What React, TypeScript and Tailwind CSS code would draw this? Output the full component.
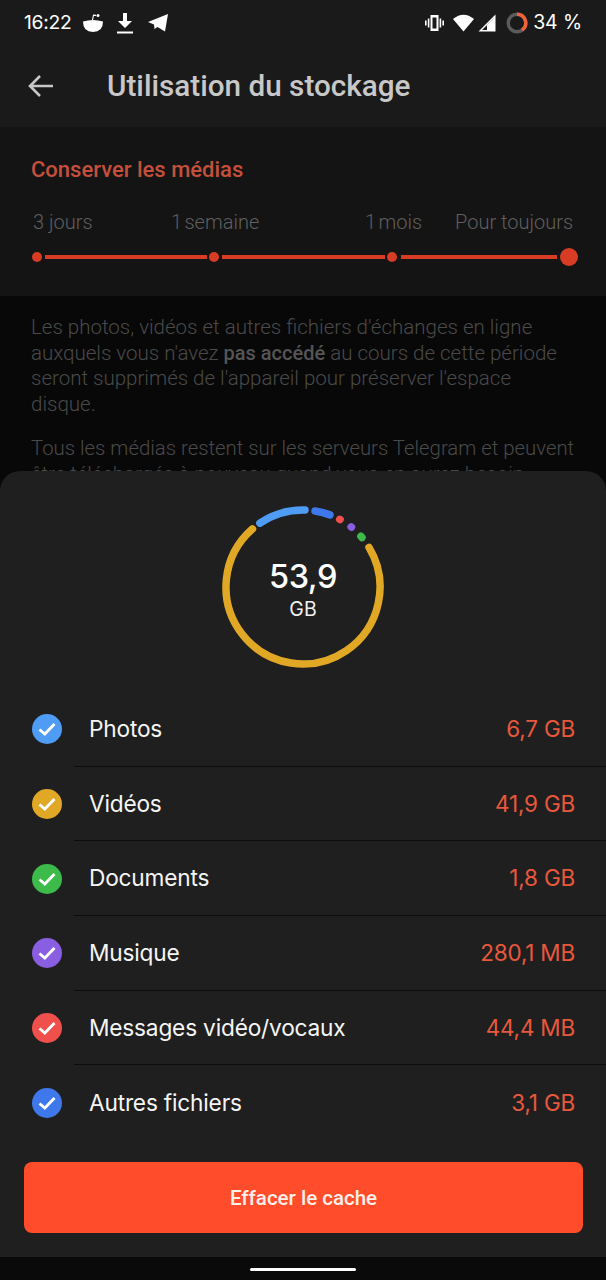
import type { ReactNode } from 'react';

const rows = [
  { label: 'Photos', size: '6,7 GB', bg: 'bg-[#4f9cf5]', line: true },
  { label: 'Vidéos', size: '41,9 GB', bg: 'bg-[#e0a825]', line: true },
  { label: 'Documents', size: '1,8 GB', bg: 'bg-[#3cba4a]', line: true },
  { label: 'Musique', size: '280,1 MB', bg: 'bg-[#8a5ee0]', line: true },
  { label: 'Messages vidéo/vocaux', size: '44,4 MB', bg: 'bg-[#f0504c]', line: true },
  { label: 'Autres fichiers', size: '3,1 GB', bg: 'bg-[#3f78ea]', line: false },
];

function polar(angle: number, r = 77) {
  const a = ((angle - 90) * Math.PI) / 180;
  return `${100 + r * Math.cos(a)} ${100 + r * Math.sin(a)}`;
}

function arc(from: number, to: number) {
  const large = to - from > 180 ? 1 : 0;
  return `M${polar(from)} A77 77 0 ${large} 1 ${polar(to)}`;
}

function Ring() {
  return (
    <svg width="200" height="200" viewBox="0 0 200 200" fill="none" strokeWidth="7.5" strokeLinecap="round">
      <path d={arc(59, 319)} stroke="#e0a825" />
      <path d={arc(-34, 1.5)} stroke="#4f9cf5" />
      <path d={arc(9, 20.5)} stroke="#3f78ea" />
      <path d={arc(28.5, 28.8)} stroke="#f0504c" />
      <path d={arc(38.7, 39)} stroke="#8a5ee0" />
      <path d={arc(48.8, 50)} stroke="#3cba4a" />
    </svg>
  );
}

function StatusIcon({ children, w, h }: { children: ReactNode; w: number; h: number }) {
  return (
    <svg width={w} height={h} viewBox={`0 0 ${w} ${h}`} fill="#fff">
      {children}
    </svg>
  );
}

function Row({ label, size, bg, line }: (typeof rows)[number]) {
  return (
    <div className="flex h-[74.7px] items-stretch">
      <div className="flex w-[74px] shrink-0 items-center pl-[32px]">
        <div className={`flex h-[30px] w-[30px] items-center justify-center rounded-full ${bg}`}>
          <svg width="22" height="22" viewBox="0 0 22 22" fill="none" stroke="#fff" strokeWidth="2.8">
            <path d="M3.5 11.5 L8.8 16 L18.5 6" />
          </svg>
        </div>
      </div>
      <div className={`flex flex-1 items-center justify-between pl-[15px] pr-[31px] font-['Inter',sans-serif] ${line ? 'border-b border-[#0c0c0c]' : ''}`}>
        <span className="text-[22.7px] tracking-[-0.2px] text-[#f5f5f5]">{label}</span>
        <span className="text-[22.5px] tracking-[-0.2px] text-[#e8583c]">{size}</span>
      </div>
    </div>
  );
}

export default function App() {
  return (
    <div className="relative h-[1280px] w-[606px] overflow-hidden bg-[#080808] font-['Roboto',sans-serif]">
      <div className="h-[127px] bg-[#1a1a1a]">
        <div className="flex h-[45px] items-center justify-between pl-[24px] pr-[24px]">
          <div className="flex items-center">
            <span className="w-[48px] font-['Inter',sans-serif] text-[19.3px] tracking-[-0.3px] text-white">16:22</span>
            <div className="ml-[11px]">
              <StatusIcon w={20} h={22}>
                <path d="M0 9.5 Q10 6.5 20 9.5 Q20 20 10 20 Q0 20 0 9.5Z" />
                <circle cx="15" cy="3.5" r="1.5" />
                <path d="M9.5 8 L10.5 3.2 L13 3.4" fill="none" stroke="#fff" strokeWidth="1.1" />
              </StatusIcon>
            </div>
            <div className="ml-[14px]">
              <StatusIcon w={16} h={22}>
                <path d="M6 1h4v8h5l-7 7-7-7h5z" />
                <rect x="0" y="19.5" width="16" height="2" />
              </StatusIcon>
            </div>
            <div className="ml-[15px]">
              <StatusIcon w={20} h={20}>
                <path d="M0 9 L20 1 L17 18.5 L9.5 14 L6.5 16 L6 11.5 Z" />
              </StatusIcon>
            </div>
          </div>
          <div className="flex items-center">
            <StatusIcon w={19} h={18}>
              <path fillRule="evenodd" d="M5.5 1h8v16h-8zM7.5 3.5v11h4v-11z" />
              <path d="M2.8 4.5h1.6v9H2.8zM14.6 4.5h1.6v9h-1.6zM0 6.5h1.6v5H0zM17.4 6.5H19v5h-1.6z" />
            </StatusIcon>
            <div className="ml-[9px]">
              <StatusIcon w={21} h={18}>
                <path d="M0 5 Q10.5 -3.5 21 5 L10.5 17.5 Z" />
              </StatusIcon>
            </div>
            <div className="ml-[4px]">
              <StatusIcon w={18} h={18}>
                <path fillRule="evenodd" d="M17.5 0.5v17H0.5zM16 4L4 16h12z" />
                <path d="M9 11L16 4v12H9z" />
              </StatusIcon>
            </div>
            <svg width="22" height="22" viewBox="0 0 22 22" fill="none" strokeWidth="3.4" className="ml-[10px]">
              <circle cx="11" cy="11" r="8.8" stroke="#5b5b5b" />
              <path d="M11 2.2 A8.8 8.8 0 0 1 16 18.2" stroke="#f0623c" />
            </svg>
            <span className="ml-[5px] font-['Inter',sans-serif] text-[19.5px] tracking-[-0.1px] text-white">34 %</span>
          </div>
        </div>
        <div className="flex h-[82px] items-center pl-[27px]">
          <svg width="28" height="28" viewBox="0 0 28 28" fill="none" stroke="#c8c8c8" strokeWidth="2.6">
            <path d="M26 14H3M13 4 3 14l10 10" />
          </svg>
          <span className="ml-[52px] text-[29.7px] font-medium text-[#c8c8c8]">Utilisation du stockage</span>
        </div>
      </div>

      <div className="h-[169px] bg-[#141414] px-[31px] pt-[29px]">
        <div className="text-[22px] font-medium leading-[28px] text-[#c4503c]">Conserver les médias</div>
        <div className="mt-[24px] flex text-[20px] font-light leading-[28px] text-[#5f5f5f]">
          <span className="ml-[2px] w-[138px] shrink-0">3 jours</span>
          <span className="w-[194px] shrink-0 [word-spacing:-2.5px]">1 semaine</span>
          <span className="w-[90px] shrink-0 [word-spacing:-2.5px]">1 mois</span>
          <span className="whitespace-nowrap">Pour toujours</span>
        </div>
        <div className="ml-[1px] mt-[12px] flex w-[546px] items-center">
          <div className="h-[10px] w-[10px] shrink-0 rounded-full bg-[#d83c24]" />
          <div className="ml-[3px] mr-[2px] h-[4px] w-[163px] bg-[#d83c24]" />
          <div className="h-[10px] w-[10px] shrink-0 rounded-full bg-[#d83c24]" />
          <div className="ml-[3px] mr-[2px] h-[4px] w-[163px] bg-[#d83c24]" />
          <div className="h-[10px] w-[10px] shrink-0 rounded-full bg-[#d83c24]" />
          <div className="ml-[4px] mr-[3px] h-[4px] w-[157px] bg-[#d83c24]" />
          <div className="h-[18px] w-[18px] shrink-0 rounded-full bg-[#d83c24]" />
        </div>
      </div>

      <div className="whitespace-nowrap pl-[31px] pt-[19px] text-[20.5px] font-light leading-[25.7px] text-[#4a4a4a]">
        <p>
          Les photos, vidéos et autres fichiers d'échanges en ligne
          <br />
          auxquels vous n'avez <span className="text-[20px] font-medium text-[#555555]">pas accédé</span> au cours de
          cette période
          <br />
          seront supprimés de l'appareil pour préserver l'espace
          <br />
          disque.
        </p>
        <p className="mt-[18px] text-[20.35px]">
          Tous les médias restent sur les serveurs Telegram et peuvent
          <br />
          être téléchargés à nouveau quand vous en aurez besoin.
        </p>
      </div>

      <div className="absolute inset-x-0 bottom-0 top-[471px] rounded-t-[20px] bg-[#1f1f1f]">
        <div className="relative mx-auto mt-[16px] h-[200px] w-[200px]">
          <Ring />
          <div className="absolute inset-0 flex flex-col items-center justify-center pt-[4px]">
            <span className="font-['Inter',sans-serif] text-[32.5px] font-medium leading-[40px] tracking-[-0.5px] text-white">53,9</span>
            <span className="font-['Inter',sans-serif] text-[19.5px] leading-[25px] text-[#f0f0f0]">GB</span>
          </div>
        </div>
        <div className="mt-[5px]">
          {rows.map((r) => (
            <Row key={r.label} {...r} />
          ))}
        </div>
        <div className="pl-[24px] pr-[23px] pt-[22px]">
          <button className="flex h-[71px] w-full items-center justify-center rounded-[8px] bg-[#ff4c2b] pt-[1px] text-[20.5px] font-medium text-[#fff0ea]">
            Effacer le cache
          </button>
        </div>
        <div className="absolute inset-x-0 bottom-0 flex h-[23px] items-start justify-center bg-[#0a0a0a] pt-[11px]">
          <div className="h-[3px] w-[106px] rounded-full bg-white" />
        </div>
      </div>
    </div>
  );
}
